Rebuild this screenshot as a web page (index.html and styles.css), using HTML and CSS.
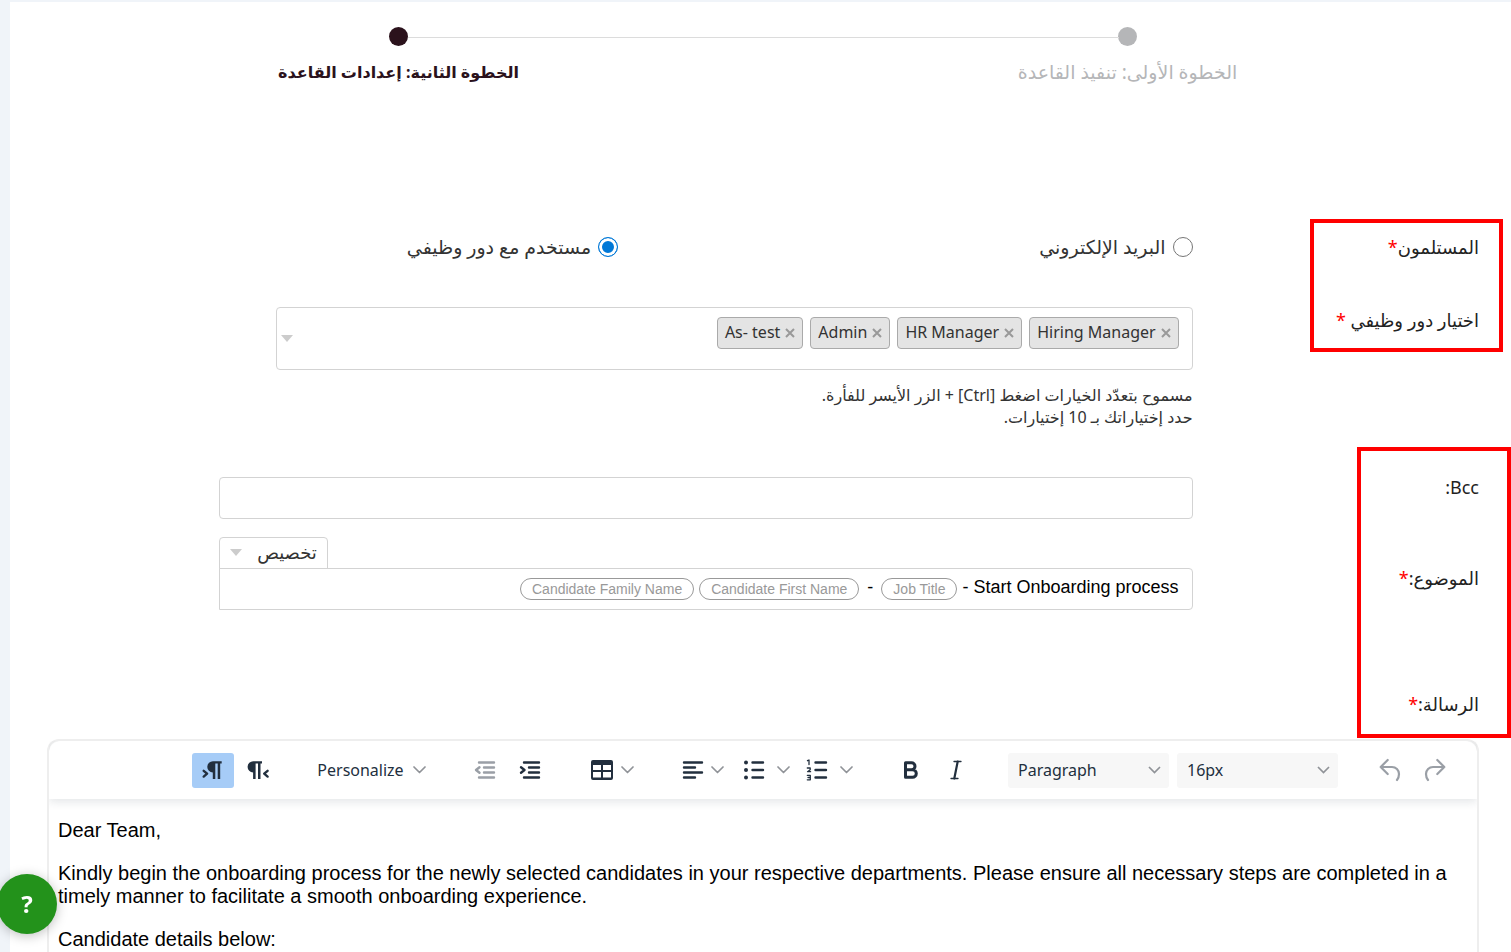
FILE: index.html
```
<!DOCTYPE html>
<html lang="ar" dir="rtl">
<head>
    <meta charset="UTF-8">
    <meta name="viewport" content="width=device-width, initial-scale=1.0">
    <title>إعدادات القاعدة</title>
    <link rel="stylesheet" href="styles.css">
</head>
<body>
    <main class="page">
        <!-- Steps -->
        <ol class="steps">
            <li class="step">
                <span class="dot"></span>
                <span class="step-title">الخطوة الأولى: تنفيذ القاعدة</span>
            </li>
            <li class="step active">
                <span class="dot"></span>
                <span class="step-title">الخطوة الثانية: إعدادات القاعدة</span>
            </li>
        </ol>

        <form class="rule-form">
            <!-- Recipients -->
            <section class="recipients">
                <div class="row radio-row">
                    <span class="label" id="recipientsLabel">المستلمون<span class="required">*</span></span>
                    <div class="field radios" role="radiogroup" aria-labelledby="recipientsLabel">
                        <label class="radio"><input type="radio" name="recipients"> البريد الإلكتروني</label>
                        <label class="radio"><input type="radio" name="recipients" checked> مستخدم مع دور وظيفي</label>
                    </div>
                </div>
                <div class="row role-row">
                    <label class="label" for="roles">اختيار دور وظيفي <span class="required">*</span></label>
                    <div class="field">
                        <div class="role-box">
                            <span class="chip"><button type="button" aria-label="Remove Hiring Manager"><svg width="10" height="10" viewBox="0 0 10 10"><path d="M1 1l8 8M9 1l-8 8"/></svg></button>Hiring Manager</span>
                            <span class="chip"><button type="button" aria-label="Remove HR Manager"><svg width="10" height="10" viewBox="0 0 10 10"><path d="M1 1l8 8M9 1l-8 8"/></svg></button>HR Manager</span>
                            <span class="chip"><button type="button" aria-label="Remove Admin"><svg width="10" height="10" viewBox="0 0 10 10"><path d="M1 1l8 8M9 1l-8 8"/></svg></button>Admin</span>
                            <span class="chip"><button type="button" aria-label="Remove As- test"><svg width="10" height="10" viewBox="0 0 10 10"><path d="M1 1l8 8M9 1l-8 8"/></svg></button>As- test</span>
                            <input type="text" id="roles" class="role-input">
                            <span class="arrow"></span>
                        </div>
                        <p class="hint">مسموح بتعدّد الخيارات اضغط [Ctrl] + الزر الأيسر للفأرة.<br>حدد إختياراتك بـ 10 إختيارات.</p>
                    </div>
                </div>
                <div class="highlight"></div>
            </section>

            <!-- Message details -->
            <section class="details">
                <div class="row">
                    <label class="label" for="bcc">Bcc:</label>
                    <div class="field"><input type="text" id="bcc" class="text-input"></div>
                </div>
                <div class="row subject-row">
                    <span class="label" id="subjectLabel">الموضوع:<span class="required">*</span></span>
                    <div class="field">
                        <div class="tab">
                            <select aria-label="تخصيص"><option>تخصيص</option></select>
                            <span class="arrow"></span>
                        </div>
                        <div class="subject" role="textbox" contenteditable="true" aria-labelledby="subjectLabel">
                            <span>Start Onboarding process</span>
                            <span>-</span>
                            <span class="pill">Job Title</span>
                            <span class="dash">-</span>
                            <span class="pill">Candidate First Name</span>
                            <span class="pill">Candidate Family Name</span>
                        </div>
                    </div>
                </div>
                <div class="row message-row">
                    <span class="label" id="messageLabel">الرسالة:<span class="required">*</span></span>
                </div>
                <div class="highlight"></div>
            </section>

            <!-- Editor -->
            <div class="editor" dir="ltr" lang="en">
                <div class="toolbar" role="toolbar">
                    <div class="group">
                        <button type="button" class="tool on" aria-label="Right to left">
                            <svg width="24" height="24" viewBox="0 0 24 24"><path d="M12 3.300h8.700v2.200h-1.500V21h-2.500V5.500h-2.400V21h-2.500v-6.500a5.600 5.600 0 0 1 .2-11.200z" fill="currentColor"/><path d="M2.700 12.800l3.400 2.900-3.400 2.900" class="thick"/></svg>
                        </button>
                        <button type="button" class="tool" aria-label="Left to right">
                            <svg width="24" height="24" viewBox="0 0 24 24"><path d="M7.300 3.300H16v2.200h-1.500V21H12V5.500H9.600V21H7.100v-6.500a5.600 5.600 0 0 1 .2-11.200z" fill="currentColor"/><path d="M21.600 12.800l-3.400 2.900 3.400 2.900" class="thick"/></svg>
                        </button>
                    </div>
                    <div class="group">
                        <button type="button" class="tool wide">Personalize
                            <svg class="chevron" width="13" height="8" viewBox="0 0 13 8"><path d="M1 1l5.500 5.500L12 1"/></svg>
                        </button>
                    </div>
                    <div class="group">
                        <button type="button" class="tool" disabled aria-label="Decrease indent">
                            <svg width="24" height="24" viewBox="0 0 24 24"><path d="M6 4.500h15M11 9.500h10M11 14.500h10M6 19.500h15" class="thick"/><path d="M6.500 9.300L3 12l3.500 2.700" class="thick"/></svg>
                        </button>
                        <button type="button" class="tool" aria-label="Increase indent">
                            <svg width="24" height="24" viewBox="0 0 24 24"><path d="M6 4.500h15M11 9.500h10M11 14.500h10M6 19.500h15" class="thick"/><path d="M3 9.300L6.500 12 3 14.700" class="thick"/></svg>
                        </button>
                    </div>
                    <div class="group">
                        <button type="button" class="tool drop" aria-label="Table">
                            <svg width="24" height="24" viewBox="0 0 24 24"><path fill="currentColor" fill-rule="evenodd" d="M3 2h18a2 2 0 0 1 2 2v16a2 2 0 0 1-2 2H3a2 2 0 0 1-2-2V4a2 2 0 0 1 2-2zm0 5v5h8V7zm10 0v5h8V7zM3 14v5.500h8V14zm10 0v5.500h8V14z"/></svg>
                            <svg class="chevron" width="13" height="8" viewBox="0 0 13 8"><path d="M1 1l5.500 5.500L12 1"/></svg>
                        </button>
                    </div>
                    <div class="group">
                        <button type="button" class="tool drop" aria-label="Align">
                            <svg width="22" height="24" viewBox="0 0 22 24"><path d="M2 4.500h18M2 9.500h11M2 14.500h18M2 19.500h11" class="thick"/></svg>
                            <svg class="chevron" width="13" height="8" viewBox="0 0 13 8"><path d="M1 1l5.500 5.500L12 1"/></svg>
                        </button>
                        <button type="button" class="tool drop list" aria-label="Bullet list">
                            <svg width="22" height="24" viewBox="0 0 22 24"><path d="M9.500 4.500H20M9.500 12H20M9.500 19.500H20" class="thick"/><g fill="currentColor"><circle cx="3" cy="4.500" r="2"/><circle cx="3" cy="12" r="2"/><circle cx="3" cy="19.500" r="2"/></g></svg>
                            <svg class="chevron" width="13" height="8" viewBox="0 0 13 8"><path d="M1 1l5.500 5.500L12 1"/></svg>
                        </button>
                        <button type="button" class="tool drop list" aria-label="Numbered list">
                            <svg width="22" height="24" viewBox="0 0 22 24"><path d="M9.500 4.500H20M9.500 12H20M9.500 19.500H20" class="thick"/><path d="M1.500 2.700L3 2v4.500M1.300 10h2.900v1.700l-2.600 2h3M1.300 17.300h3v4.500h-3M2 19.500h2" class="digit"/></svg>
                            <svg class="chevron" width="13" height="8" viewBox="0 0 13 8"><path d="M1 1l5.500 5.500L12 1"/></svg>
                        </button>
                    </div>
                    <div class="group">
                        <button type="button" class="tool" aria-label="Bold">
                            <svg width="24" height="24" viewBox="0 0 24 24"><path d="M6.500 4.700v14.600M6.500 4.700h6a3.500 3.500 0 0 1 0 7h-6M6.500 11.700h7a3.800 3.800 0 0 1 0 7.600h-7" class="bold"/></svg>
                        </button>
                        <button type="button" class="tool" aria-label="Italic">
                            <svg width="24" height="24" viewBox="0 0 24 24"><path d="M10 3.500h7M7 20.500h7" class="serif"/><path d="M13.700 3.500l-3.400 17" class="slant"/></svg>
                        </button>
                    </div>
                    <div class="group selects">
                        <div class="select">
                            <select aria-label="Block"><option>Paragraph</option></select>
                            <svg class="chevron" width="13" height="8" viewBox="0 0 13 8"><path d="M1 1l5.500 5.500L12 1"/></svg>
                        </div>
                        <div class="select">
                            <select aria-label="Font size"><option>16px</option></select>
                            <svg class="chevron" width="13" height="8" viewBox="0 0 13 8"><path d="M1 1l5.500 5.500L12 1"/></svg>
                        </div>
                    </div>
                    <div class="group">
                        <button type="button" class="tool" disabled aria-label="Undo">
                            <svg width="24" height="24" viewBox="0 0 24 24"><path d="M9.700 2L2.700 9l7 7M2.700 9H14a7 7 0 0 1 7 7c0 2.500-.8 4.500-2 6" class="curve"/></svg>
                        </button>
                        <button type="button" class="tool" disabled aria-label="Redo">
                            <svg width="24" height="24" viewBox="0 0 24 24"><path d="M14.300 2l7 7-7 7M21.300 9H10a7 7 0 0 0-7 7c0 2.500.8 4.500 2 6" class="curve"/></svg>
                        </button>
                    </div>
                </div>
                <div class="editor-body" role="textbox" contenteditable="true" aria-labelledby="messageLabel">
                    <p>Dear Team,</p>
                    <p>Kindly begin the onboarding process for the newly selected candidates in your respective departments. Please ensure all necessary steps are completed in a timely manner to facilitate a smooth onboarding experience.</p>
                    <p>Candidate details below:</p>
                </div>
            </div>
        </form>
    </main>

    <button type="button" class="help">?</button>
</body>
</html>
```
FILE: styles.css
```
* {
    box-sizing: border-box;
}
body {
    margin: 0;
    background-color: #f0f4f9;
    color: #333;
    font-family: "Noto Sans", "DejaVu Sans", sans-serif;
    font-size: 16px;
    line-height: 20px;
}
button, select, input {
    font: inherit;
    color: inherit;
}
p {
    margin: 0;
}

.page {
    display: flex;
    flex-direction: column;
    min-height: calc(100vh - 2px);
    margin-top: 2px;
    margin-left: 10px;
    padding-top: 25px;
    background-color: white;
}

/* Steps */
.steps {
    display: grid;
    grid-template-columns: 1fr 1fr;
    margin: 0 19px 0 24px;
    padding: 0;
    list-style: none;
}
.step {
    position: relative;
    display: flex;
    flex-direction: column;
    align-items: center;
    gap: 16px;
    color: #b5b6b8;
    font-size: 19px;
}
.step.active {
    color: #2b121c;
    font-size: 16px;
    font-weight: bold;
}
.dot {
    width: 19px;
    height: 19px;
    border-radius: 50%;
    background-color: currentColor;
}
.step:first-child::after {
    content: "";
    position: absolute;
    top: 10px;
    right: calc(50% + 9px);
    width: calc(100% - 18px);
    height: 1px;
    background-color: #dcdcdc;
}

/* Form rows */
.rule-form {
    display: flex;
    flex: 1;
    flex-direction: column;
    padding: 155px 32px 0 37px;
}
.row {
    display: grid;
    grid-template-columns: 20% 68%;
}
.label {
    color: #222;
    font-size: 18px;
}
.required {
    color: red;
}
.recipients,
.details {
    position: relative;
}
.highlight {
    position: absolute;
    border: 4px solid red;
    pointer-events: none;
}
.recipients .highlight {
    top: -18px;
    right: -24px;
    width: 193px;
    height: 133px;
}
.details .highlight {
    top: -30px;
    right: -32px;
    width: 154px;
    height: 291px;
}

/* Recipients */
.radios {
    display: grid;
    grid-template-columns: 59% 41%;
}
.radio {
    display: flex;
    align-items: center;
    gap: 7px;
    height: 20px;
    font-size: 19px;
}
.radio input {
    width: 20px;
    height: 20px;
    margin: 0;
    appearance: none;
    border: 1px solid #767676;
    border-radius: 50%;
}
.radio input:checked {
    border: 1px solid #0078d7;
    background-color: #0078d7;
    box-shadow: inset 0 0 0 3px white;
}
.role-row {
    margin-top: 50px;
}
.role-row .label {
    padding-top: 3px;
}
.role-box {
    position: relative;
    display: flex;
    align-items: flex-start;
    gap: 7px;
    min-height: 63px;
    margin-left: 57px;
    padding: 9px 13px;
    border: 1px solid #d3d3d3;
    border-radius: 4px;
}
.chip {
    display: flex;
    align-items: center;
    gap: 5px;
    height: 32px;
    padding: 0 7px 3px;
    border: 1px solid #aaa;
    border-radius: 4px;
    background-color: #e4e4e4;
    white-space: nowrap;
}
.chip button {
    display: flex;
    padding: 2px 0 0;
    border: 0;
    background: none;
}
.chip path {
    stroke: #999;
    stroke-width: 2;
}
.role-input {
    flex: 1;
    min-width: 0;
    height: 32px;
    border: 0;
    outline: 0;
}
.arrow {
    border: 6px solid transparent;
    border-top: 7px solid #ccc;
    border-bottom: 0;
}
.role-box .arrow {
    position: absolute;
    top: 27px;
    left: 4px;
}
.hint {
    padding-top: 14px;
    line-height: 22px;
}

/* Message details */
.details {
    margin-top: 49px;
}
.text-input {
    display: block;
    width: 100%;
    height: 42px;
    padding: 0 12px;
    border: 1px solid #d3d3d3;
    border-radius: 4px;
}
.subject-row {
    margin-top: 18px;
}
.subject-row .label {
    padding-top: 31px;
}
.subject-row .field {
    display: flex;
    flex-direction: column;
    align-items: flex-end;
}
.tab {
    display: flex;
    align-items: center;
    justify-content: space-between;
    width: 109px;
    height: 32px;
    margin-bottom: -1px;
    padding: 0 10px 2px;
    border: 1px solid #d3d3d3;
    border-radius: 4px 4px 0 0;
}
.tab select {
    width: 72px;
    height: 28px;
    padding: 0;
    appearance: none;
    border: 0;
    background: none;
    font-size: 18px;
    line-height: 26px;
}
.subject {
    display: flex;
    align-items: center;
    gap: 5px;
    width: 100%;
    height: 42px;
    padding: 0 13px 4px;
    border: 1px solid #d3d3d3;
    border-radius: 0 4px 4px 0;
    color: black;
    font-family: "Liberation Sans", Arial, sans-serif;
    font-size: 18px;
}
.pill {
    margin-top: 3px;
    padding: 0 11px;
    border: 1px solid #999;
    border-radius: 11px;
    color: #999;
    font-size: 14px;
}
.dash {
    padding: 0 3px;
}
.message-row {
    margin-top: 84px;
}

/* Editor */
.editor {
    flex: 1;
    margin-top: 25px;
    border: 2px solid #eee;
    border-bottom: 0;
    border-radius: 12px 12px 0 0;
}
.toolbar {
    display: flex;
    align-items: center;
    justify-content: flex-end;
    gap: 31px;
    height: 58px;
    padding-right: 21px;
    border-radius: 12px 12px 0 0;
    box-shadow: 0 3px 10px rgba(34, 47, 62, 0.12);
    clip-path: inset(0 0 -14px 0);
}
.group {
    display: flex;
    gap: 3px;
}
.tool {
    display: flex;
    align-items: center;
    justify-content: center;
    width: 42px;
    height: 35px;
    padding: 0;
    border: 0;
    border-radius: 3px;
    background: none;
    color: #222f3e;
}
.tool.on {
    background-color: #a6ccf7;
}
.tool.wide {
    gap: 9px;
    width: 123px;
}
.tool.drop {
    gap: 7px;
    width: 60px;
}
.tool.list {
    gap: 12px;
}
.tool:disabled {
    color: #9a9fa6;
}
.tool svg {
    fill: none;
    stroke-linecap: round;
    stroke-linejoin: round;
}
.tool .thick {
    stroke: currentColor;
    stroke-width: 2.4;
}
.tool .bold {
    stroke: currentColor;
    stroke-width: 3;
}
.tool .serif,
.tool .digit {
    stroke: currentColor;
    stroke-width: 1.3;
}
.tool .slant,
.tool .curve {
    stroke: currentColor;
    stroke-width: 2.2;
}
.chevron path {
    fill: none;
    stroke: #909398;
    stroke-width: 1.7;
}
.selects {
    gap: 8px;
}
.select {
    display: grid;
    align-items: center;
    width: 161px;
    height: 35px;
    border-radius: 3px;
    background-color: #f7f7f7;
    color: #222f3e;
}
.select select {
    grid-area: 1 / 1;
    height: 35px;
    padding: 0 10px;
    appearance: none;
    border: 0;
    background: none;
}
.select .chevron {
    grid-area: 1 / 1;
    justify-self: end;
    margin-right: 8px;
    pointer-events: none;
}
.editor-body {
    padding: 20px 9px 0;
    color: black;
    font-family: "Liberation Sans", Arial, sans-serif;
    font-size: 20px;
    line-height: 23px;
}
.editor-body p + p {
    margin-top: 20px;
}

/* Help button */
.help {
    position: fixed;
    left: -3px;
    bottom: 18px;
    width: 60px;
    height: 60px;
    padding: 0;
    border: 0;
    border-radius: 50%;
    background-color: #23921b;
    box-shadow: 0 2px 12px rgba(0, 0, 0, 0.25);
    color: white;
    font-size: 24px;
    font-weight: bold;
}
```
